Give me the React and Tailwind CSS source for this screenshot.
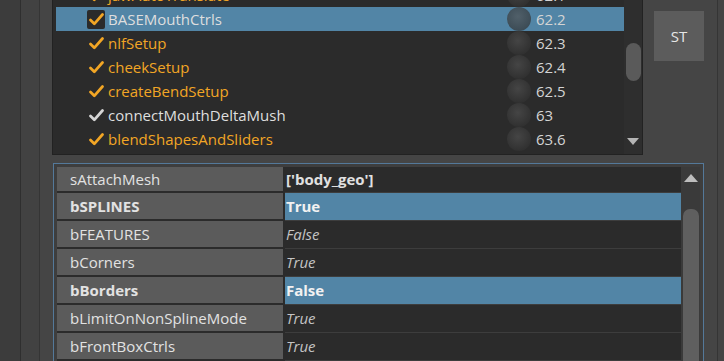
import React from 'react';

const steps = [
  { name: 'jawAutoTranslate', value: '62.1', color: 'orange' },
  { name: 'BASEMouthCtrls', value: '62.2', color: 'white', selected: true },
  { name: 'nlfSetup', value: '62.3', color: 'orange' },
  { name: 'cheekSetup', value: '62.4', color: 'orange' },
  { name: 'createBendSetup', value: '62.5', color: 'orange' },
  { name: 'connectMouthDeltaMush', value: '63', color: 'white', whiteCheck: true },
  { name: 'blendShapesAndSliders', value: '63.6', color: 'orange' },
];

const attrs = [
  { key: 'sAttachMesh', value: "['body_geo']", kind: 'plainBold' },
  { key: 'bSPLINES', value: 'True', selected: true },
  { key: 'bFEATURES', value: 'False' },
  { key: 'bCorners', value: 'True' },
  { key: 'bBorders', value: 'False', selected: true },
  { key: 'bLimitOnNonSplineMode', value: 'True' },
  { key: 'bFrontBoxCtrls', value: 'True' },
];

const Check = ({ color }) => (
  <svg width="15" height="13" viewBox="0 0 15 13" fill="none">
    <path d="M1.5 7 L5.3 10.8 L13.5 1.5" stroke={color} strokeWidth="2.7" strokeLinecap="round" strokeLinejoin="round" />
  </svg>
);

const StepRow = ({ step }) => (
  <div className={`flex items-center h-[24px] shrink-0 ${step.selected ? 'bg-[#5285a6]' : ''}`}>
    <div className="ml-[31px] w-[18px] h-[19px] flex items-center justify-center">
      <div className={`w-[18px] h-[19px] rounded-[2px] flex items-center justify-center ${step.selected ? 'bg-[#2b2b2b]' : ''}`}>
        <Check color={step.whiteCheck ? '#d6d6d6' : '#f2a625'} />
      </div>
    </div>
    <span
      className={`ml-[3px] w-[399px] text-[15px] leading-none ${
        step.color === 'orange' ? 'text-[#f2a625]' : 'text-[#dedede]'
      }`}
    >
      {step.name}
    </span>
    <div className="w-[24px] h-[24px] rounded-full bg-[radial-gradient(circle_at_45%_40%,rgba(80,80,80,0.7),rgba(40,40,40,0.7))]" />
    <span className="ml-[5px] text-[15px] leading-none text-[#d4d4d4]">{step.value}</span>
  </div>
);

const AttrRow = ({ attr, first }) => (
  <div className={`flex shrink-0 ${first ? 'h-[26px]' : 'h-[28px]'}`}>
    <div
      className={`w-[226px] mb-[2px] bg-[#5b5b5b] flex items-center pl-[13px] text-[15px] text-[#e2e2e2] ${
        attr.selected ? 'font-bold' : ''
      }`}
    >
      {attr.key}
    </div>
    <div className="w-[2px] bg-[#2b2b2b]" />
    <div
      className={`flex-1 border-b border-[#3d3d3d] flex items-center pl-[1px] text-[15px] ${
        attr.selected
          ? 'bg-[#5285a6] font-bold text-[#f2f2f2]'
          : attr.kind === 'plainBold'
          ? 'bg-[#2b2b2b] font-bold text-[#e0e0e0]'
          : 'bg-[#2b2b2b] italic text-[#c4c4c4]'
      }`}
    >
      {attr.value}
    </div>
  </div>
);

export default function App() {
  return (
    <div className="flex w-[724px] h-[361px] overflow-hidden bg-[#444444] font-['Open_Sans','Noto_Sans',sans-serif]">
      {/* left gutters */}
      <div className="w-[21px] shrink-0 bg-[#3c3c3c] border-r border-[#2f2f2f]" />
      <div className="w-[19px] shrink-0 bg-[#424242] border-r border-[#353535]" />

      {/* main column */}
      <div className="w-[678px] shrink-0 flex flex-col pl-[12px] bg-[#454545] border-r border-[#353535]">
        <div className="flex h-[155px] shrink-0">
          {/* step list */}
          <div className="w-[591px] h-[155px] flex border-l border-r border-b border-[#222222] bg-[#2b2b2b] overflow-hidden">
            <div className="flex-1 pl-[3px] overflow-hidden">
              <div className="flex flex-col -mt-[17px]">
                {steps.map((s) => (
                  <StepRow key={s.name} step={s} />
                ))}
              </div>
            </div>
            <div className="w-[18px] flex flex-col items-center bg-[#2e2e2e]">
              <div className="mt-[43px] w-[15px] h-[38px] rounded-full bg-[#5a5a5a]" />
              <div className="flex-1" />
              <svg width="12" height="7" viewBox="0 0 12 7" className="mb-[9px]">
                <path d="M0 0 L12 0 L6 7 Z" fill="#b4b4b4" />
              </svg>
            </div>
          </div>

          {/* ST button */}
          <div className="ml-[11px] mt-[11px] w-[50px] h-[50px] bg-[#5c5c5c] flex items-center justify-center text-[15px] text-[#e6e6e6]">
            ST
          </div>
        </div>

        {/* attribute panel */}
        <div className="mt-[8px] ml-[1px] w-[651px] flex-1 border border-b-0 border-[#54799a] bg-[#3e3e3e] p-[3px] pb-0 flex">
          <div className="w-[624px] flex flex-col bg-[#2b2b2b]">
            {attrs.map((a, i) => (
              <AttrRow key={a.key} attr={a} first={i === 0} />
            ))}
          </div>
          <div className="w-[19px] flex flex-col items-center bg-[#3a3a3a]">
            <svg width="14" height="8" viewBox="0 0 14 8" className="mt-[7px]">
              <path d="M0 8 L14 8 L7 0 Z" fill="#bdbdbd" />
            </svg>
            <div className="mt-[27px] w-[16px] flex-1 rounded-t-[7px] bg-[#5f5f5f]" />
          </div>
        </div>
      </div>
      <div className="flex-1 bg-[#444444]" />
    </div>
  );
}
